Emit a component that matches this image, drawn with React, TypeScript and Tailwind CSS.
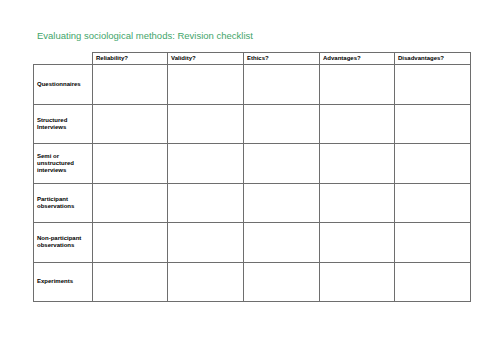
const columns = ['Reliability?', 'Validity?', 'Ethics?', 'Advantages?', 'Disadvantages?']

const methods = [
  ['Questionnaires'],
  ['Structured', 'Interviews'],
  ['Semi or', 'unstructured', 'interviews'],
  ['Participant', 'observations'],
  ['Non-participant', 'observations'],
  ['Experiments'],
]

const widths = ['w-[75px]', 'w-[76px]', 'w-[76px]', 'w-[75px]', 'w-[76px]']

export default function App() {
  return (
    <div className="w-[500px] h-[353px] bg-white pl-[33px] pt-[30px] font-['Liberation_Sans',Arial,sans-serif]">
      <h1 className="pl-[4px] text-[9.5px] leading-[11px] text-[#3fa56a] font-normal">
        Evaluating sociological methods: Revision checklist
      </h1>
      <table className="mt-[11px] border-collapse table-fixed">
        <thead>
          <tr className="h-[12px]">
            <th className="w-[59px] p-0" />
            {columns.map((col, i) => (
              <th
                key={col}
                className={`${widths[i]} border border-[#6e6e6e] px-[3px] py-0 text-left align-middle text-[6px] leading-[7px] font-bold text-black`}
              >
                {col}
              </th>
            ))}
          </tr>
        </thead>
        <tbody>
          {methods.map((lines, r) => (
            <tr key={r} className={r === methods.length - 1 ? 'h-[39px]' : 'h-[39.5px]'}>
              <td className="border border-[#6e6e6e] px-[3px] py-0 align-middle text-[6px] leading-[7px] font-bold text-black">
                {lines.map((l) => (
                  <div key={l}>{l}</div>
                ))}
              </td>
              {columns.map((col) => (
                <td key={col} className="border border-[#6e6e6e] p-0" />
              ))}
            </tr>
          ))}
        </tbody>
      </table>
    </div>
  )
}
